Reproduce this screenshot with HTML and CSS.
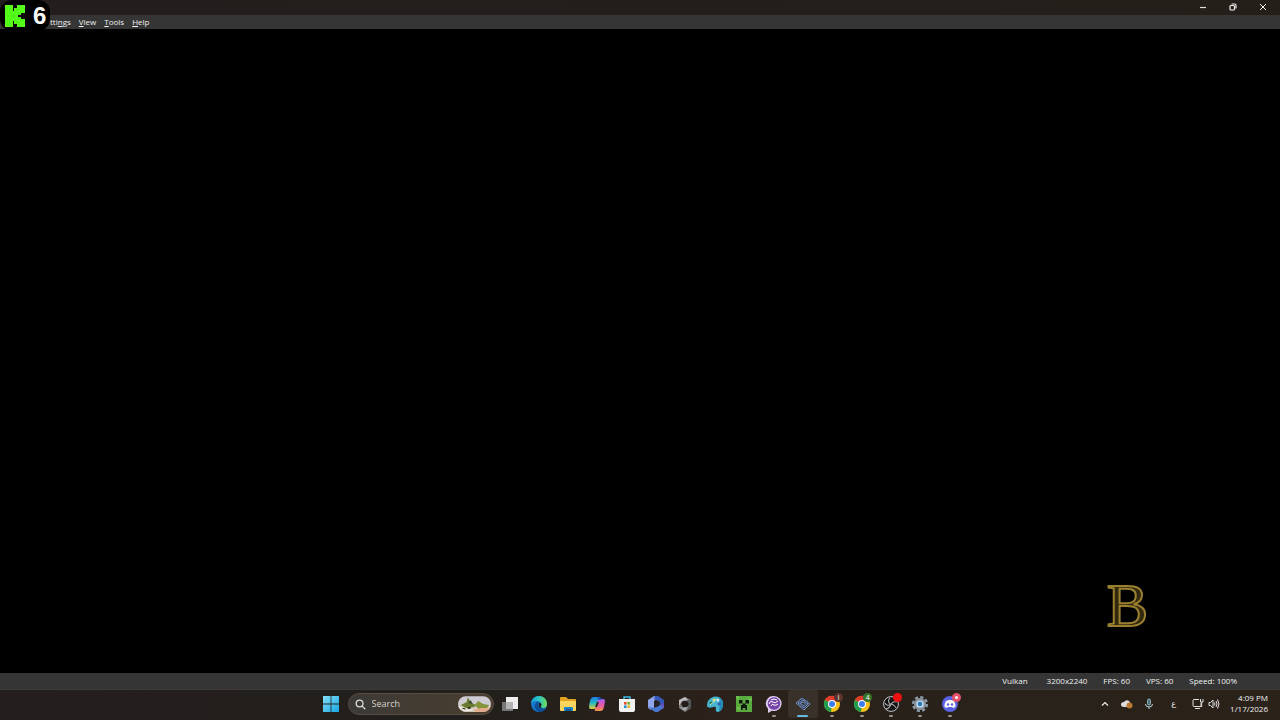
FILE: index.html
```html
<!DOCTYPE html>
<html lang="en">
<head>
    <meta charset="UTF-8">
    <meta name="viewport" content="width=device-width, initial-scale=1.0">
    <title>Emulator</title>
    <link rel="stylesheet" href="styles.css">
</head>
<body>
    <header class="titlebar">
        <button class="window-button" aria-label="Minimize">
            <svg width="8" height="8" viewBox="0 0 8 8"><path d="M1 4.5h6" stroke="#ddd" stroke-width="1.2"/></svg>
        </button>
        <button class="window-button" aria-label="Restore">
            <svg width="8" height="8" viewBox="0 0 8 8" fill="none" stroke="#eee" stroke-width="1.2"><rect x="1" y="2.5" width="4.5" height="4.5" rx="1"/><path d="M2.5 1h3Q7 1 7 2.5v3"/></svg>
        </button>
        <button class="window-button" aria-label="Close">
            <svg width="8" height="8" viewBox="0 0 8 8"><path d="M1 1l6 6M7 1L1 7" stroke="#eee"/></svg>
        </button>
    </header>

    <nav class="menubar">
        <button aria-label="Settings">tti<u>n</u>gs</button>
        <button><u>V</u>iew</button>
        <button><u>T</u>ools</button>
        <button><u>H</u>elp</button>
    </nav>

    <!-- Viewer counter that floats over the window -->
    <div class="viewers">
        <svg width="20" height="22" viewBox="0 0 20 22" fill="#53fc18">
            <rect x="0" y="0" width="8" height="22"/>
            <rect x="7" y="6" width="6" height="10"/>
            <rect x="9" y="3" width="7" height="7"/>
            <rect x="9" y="12" width="7" height="7"/>
            <rect x="12" y="0" width="8" height="8"/>
            <rect x="12" y="14" width="8" height="8"/>
        </svg>
        <span>6</span>
    </div>

    <main class="screen">
        <span class="screen-letter">B</span>
    </main>

    <div class="statusbar">
        <span class="renderer">Vulkan</span>
        <span>3200x2240</span>
        <span>FPS: 60</span>
        <span>VPS: 60</span>
        <span>Speed: 100%</span>
    </div>

    <footer class="taskbar">
        <div class="taskbar-center">
            <button class="start" aria-label="Start">
                <svg width="16" height="16" viewBox="0 0 16 16">
                    <defs><linearGradient id="win" x2="1" y2="1"><stop stop-color="#83e0fa"/><stop offset="1" stop-color="#19a5e4"/></linearGradient></defs>
                    <path d="M0 0h7.6v7.6H0zM8.4 0H16v7.6H8.4zM0 8.4h7.6V16H0zM8.4 8.4H16V16H8.4z" fill="url(#win)"/>
                </svg>
            </button>

            <label class="search">
                <svg width="11" height="11" viewBox="0 0 12 12" fill="none" stroke="#ddd" stroke-width="1.4"><circle cx="5" cy="5" r="3.7"/><path d="M7.8 7.8l3.4 3.4"/></svg>
                <input type="text" placeholder="Search" aria-label="Search">
                <svg width="33" height="18" viewBox="0 0 34 18">
                    <defs><clipPath id="pill"><rect y="1" width="34" height="16" rx="8"/></clipPath></defs>
                    <g clip-path="url(#pill)">
                        <rect width="34" height="18" fill="#cfcbd3"/>
                        <path d="M0 11l8-2 10 3 16-1v7H0z" fill="#d9cbb5"/>
                        <path d="M3 10l6-3 1-5 3 5 5 3-1 2-9 1z" fill="#697b31"/>
                        <path d="M17 10l4-4 5 3 6 1-2 3-9 1z" fill="#849438"/>
                        <path d="M11 8l2-3 2 4z" fill="#33472c"/>
                        <path d="M17 15l8-2 9 1v4H18z" fill="#e5a987"/>
                        <path d="M4 14h3M10 13h3" stroke="#272b22" stroke-width="2"/>
                        <path d="M1 12l6 4 8-1" fill="none" stroke="#eee" stroke-width="1.4"/>
                    </g>
                </svg>
            </label>

            <div class="apps">
                <button aria-label="Task view">
                    <svg width="18" height="18" viewBox="0 0 18 18"><rect x="2" y="7" width="11" height="9" fill="#777"/><rect x="6" y="2" width="12" height="12" fill="#eee"/><rect x="6" y="7" width="7" height="7" fill="#b5b5b5"/></svg>
                </button>
                <button aria-label="Edge">
                    <svg width="18" height="18" viewBox="0 0 18 18">
                        <defs><linearGradient id="edge" x2="1" y2="0"><stop stop-color="#199bdc"/><stop offset=".5" stop-color="#2ec5c1"/><stop offset="1" stop-color="#72dd52"/></linearGradient></defs>
                        <circle cx="9" cy="9" r="8" fill="#1676c9"/>
                        <path d="M1 9a8 8 0 0 1 16 0c0 3-2 4-4 4s-3-1-2-2c1-3-1-5-4-5-3 0-5 1-6 3z" fill="url(#edge)"/>
                        <path d="M7 7c-4 3-2 9 3 10 2 0 5-2 6-4-3 2-8 1-8-3 0-1 0-2 1-3z" fill="#0c4d99"/>
                        <path d="M9 8c3 0 3 2 2 3s0 2 2 2c-3 1-5-1-4-5z" fill="#211f1b"/>
                    </svg>
                </button>
                <button aria-label="File Explorer">
                    <svg width="18" height="18" viewBox="0 0 18 18"><path d="M1 3q0-1 1-1h5l2 2h7q1 0 1 1v3H1z" fill="#e3a321"/><path d="M1 6h16v9q0 1-1 1H2q-1 0-1-1z" fill="#fdd45e"/><path d="M5 16v-3q0-1 1-1h7q1 0 1 1v3z" fill="#1e83c7"/><path d="M7 14h5v2H7z" fill="#145b96"/></svg>
                </button>
                <button aria-label="Copilot">
                    <svg width="18" height="18" viewBox="0 0 18 18">
                        <defs><linearGradient id="cop1" x2="0" y2="1"><stop stop-color="#1b7ee4"/><stop offset=".5" stop-color="#24b8c4"/><stop offset="1" stop-color="#e9cf35"/></linearGradient><linearGradient id="cop2" x2="0" y2="1"><stop stop-color="#a45bf0"/><stop offset=".55" stop-color="#e85aa4"/><stop offset="1" stop-color="#f49443"/></linearGradient></defs>
                        <path d="M5 2h5q2 0 1 2L9 11q-1 3-3 3H3q-2 0-2-2Q2 2 5 2z" fill="url(#cop1)"/>
                        <path d="M13 16H8q-2 0-1-2l2-7q1-3 3-3h3q2 0 2 2-1 10-4 10z" fill="url(#cop2)"/>
                        <path d="M10 7L8 12" stroke="#292820" stroke-width="2"/>
                        <path d="M9 2h2q2 0 2 3h-2q-1-1-2-3z" fill="#1d56cb"/>
                    </svg>
                </button>
                <button aria-label="Microsoft Store">
                    <svg width="18" height="18" viewBox="0 0 18 18"><path d="M6 5V2h6v3" fill="none" stroke="#3bbbe9" stroke-width="1.4"/><path d="M1 4h16v11q0 2-2 2H3q-2 0-2-2z" fill="#f1f1f1"/><path d="M6 7h2.6v2.6H6z" fill="#e95028"/><path d="M9.4 7H12v2.6H9.4z" fill="#76ae28"/><path d="M6 10.4h2.6V13H6z" fill="#1994db"/><path d="M9.4 10.4H12V13H9.4z" fill="#eeb420"/></svg>
                </button>
                <button aria-label="Microsoft 365">
                    <svg width="18" height="18" viewBox="0 0 18 18"><path d="M7 1l5 1-5 4v7l-3 2-3-2V5z" fill="#8fa6ed"/><path d="M8 1h3l6 4v7l-4-2V7L7 4z" fill="#3557b6"/><path d="M17 8v5l-7 4-7-3 5-1 5-3z" fill="#6951b9"/><path d="M1 12l6 1 6-3 4 2-6 5H8z" fill="#4776cf"/><path d="M7 7l3-1 3 2v2l-3 2-3-1z" fill="#25232a"/></svg>
                </button>
                <button aria-label="Game launcher">
                    <svg width="18" height="18" viewBox="0 0 18 18"><path d="M9 2l6 3v8l-6 4-6-4V5z" fill="#777"/><path d="M9 2L3 5v6l3-5 6-1z" fill="#bbb"/><path d="M15 5v8l-4 2 2-6-2-4z" fill="#555"/><path d="M7 6h4l2 3-2 3H7L5 9z" fill="#211c19"/><path d="M3 12l4 1 5-1-3 4z" fill="#aaa"/></svg>
                </button>
                <button aria-label="Paint">
                    <svg width="18" height="18" viewBox="0 0 18 18"><path d="M2 6q4-6 11-4 5 3 4 9-1 5-5 6-3 0-2-4 0-2-3-1-5 2-6-1 0-3 1-5z" fill="#46b5cf"/><path d="M12 2q6 3 5 9-1 4-4 5l1-7z" fill="#238bb8"/><circle cx="5" cy="8" r="1.5" fill="#2a7742"/><circle cx="8" cy="5" r="1.5" fill="#d6df66"/><circle cx="12" cy="5" r="1.5" fill="#d7eef2"/><circle cx="13" cy="9" r="1.5" fill="#375caf"/><path d="M4 10l7-6" stroke="#c4e3d7"/></svg>
                </button>
                <button aria-label="Minecraft">
                    <svg width="18" height="18" viewBox="0 0 18 18"><rect x="1" y="1" width="16" height="16" fill="#59ab3d"/><path d="M1 1h3v3H1zM13 3h4v3h-4zM2 12h3v3H2z" fill="#6dbe4d"/><path d="M4 5h3.5v3.5H4zM10.500 5H14v3.5h-3.5zM7.5 8.5h3V10H12v5h-1.7v-2H7.7v2H6v-5h1.5z" fill="#11180e"/></svg>
                </button>
                <button class="running" aria-label="Messenger">
                    <svg width="18" height="18" viewBox="0 0 18 18"><path d="M9 1a7.5 7.5 0 1 1-2 14.7L3 18v-4.3A7.5 7.5 0 0 1 9 1z" fill="#dbc9ee"/><circle cx="9" cy="8.5" r="6.2" fill="#7542aa"/><path d="M4 9q1-4 4-2 2 2 5-1M6 11q1-3 3-1 2 1 4-1M6 5q3-2 6 0" fill="none" stroke="#fff"/></svg>
                </button>
                <button class="running active" aria-label="Emulator">
                    <svg width="18" height="18" viewBox="0 0 18 18" fill="none" stroke="#7796cb"><path d="M2 8l6-5 8 6-6 6zM4 8l5-3 5 4-4 4zM6 8l3-1 3 2-2 2z"/><path d="M4 11l5-8M8 14l6-9" stroke="#405f9b"/></svg>
                </button>
                <button class="running" aria-label="Chrome, profile 1">
                    <svg width="18" height="18" viewBox="0 0 18 18"><circle cx="9" cy="9" r="8" fill="#fbc116"/><path d="M9 9L2 5a8 8 0 0 1 14 0z" fill="#e33b2e"/><path d="M9 9l-1 8A8 8 0 0 1 2 5z" fill="#239b4c"/><circle cx="9" cy="9" r="4" fill="#fff"/><circle cx="9" cy="9" r="3" fill="#3b7ded"/></svg>
                    <span class="badge badge-brown">I</span>
                </button>
                <button class="running" aria-label="Chrome, profile 4">
                    <svg width="18" height="18" viewBox="0 0 18 18"><circle cx="9" cy="9" r="8" fill="#fbc116"/><path d="M9 9L2 5a8 8 0 0 1 14 0z" fill="#e33b2e"/><path d="M9 9l-1 8A8 8 0 0 1 2 5z" fill="#239b4c"/><circle cx="9" cy="9" r="4" fill="#fff"/><circle cx="9" cy="9" r="3" fill="#3b7ded"/></svg>
                    <span class="badge badge-green">4</span>
                </button>
                <button class="running" aria-label="OBS Studio">
                    <svg width="18" height="18" viewBox="0 0 18 18"><circle cx="9" cy="9" r="7.4" fill="#111" stroke="#c9c9c9"/><path d="M8 3q-3 3 0 6 4 0 6 4M15 7q-4-1-6 2-1 4-5 5M3 8q2 4 6 1" fill="none" stroke="#aaa" stroke-width="1.1"/></svg>
                    <span class="badge badge-red"></span>
                </button>
                <button class="running" aria-label="Settings">
                    <svg width="18" height="18" viewBox="0 0 18 18"><circle cx="9" cy="9" r="6.8" fill="none" stroke="#8a98a5" stroke-width="2.6" stroke-dasharray="3.2 2.14"/><circle cx="9" cy="9" r="6" fill="#8493a0"/><circle cx="9" cy="9" r="3.6" fill="#dceaf4"/><circle cx="9" cy="9" r="2.4" fill="#287bbd"/></svg>
                </button>
                <button class="running" aria-label="Discord">
                    <svg width="18" height="18" viewBox="0 0 18 18"><circle cx="9" cy="9" r="8" fill="#5861df"/><path d="M5 6q4-2 8 0 2 3 1.5 6L12 13l-1-1H7l-1 1-2.5-1Q3 9 5 6z" fill="#fff"/><circle cx="7" cy="9.5" r="1.2" fill="#5861df"/><circle cx="11" cy="9.5" r="1.2" fill="#5861df"/></svg>
                    <span class="badge badge-ring"></span>
                </button>
            </div>
        </div>

        <div class="tray">
            <button aria-label="Show hidden icons">
                <svg width="12" height="12" viewBox="0 0 12 12"><path d="M3 7.5l3-3 3 3" fill="none" stroke="#eee" stroke-width="1.2"/></svg>
            </button>
            <button aria-label="OneDrive">
                <svg width="12" height="12" viewBox="0 0 12 12"><path d="M3 9Q0 9 0 6.5 0 4 3 4q2-3 5-1 1 1 1 2l-3 4z" fill="#ddd"/><circle cx="8.5" cy="7.5" r="3" fill="#b97932"/></svg>
            </button>
            <button aria-label="Microphone">
                <svg width="12" height="12" viewBox="0 0 12 12"><rect x="4.5" y="1" width="3" height="6" rx="1.5" fill="#496f78" stroke="#a4c9ce" stroke-width=".8"/><path d="M2.5 6q0 3 3.5 3t3.5-3M6 9v2" fill="none" stroke="#b9d5d8"/></svg>
            </button>
            <button class="language" lang="ar">ع</button>
            <button class="network" aria-label="Network and volume">
                <svg width="12" height="12" viewBox="0 0 12 12" fill="none" stroke="#ddd"><path d="M7 1.500H2q-1 0-1 1v5q0 1 1 1h7V5M3 10.500h5M8.500 1v3h2.500V1M9.700 4v5"/></svg>
                <svg width="12" height="12" viewBox="0 0 12 12" fill="none" stroke="#ddd"><path d="M1 4.500h1.500L5 2v8L2.500 7.500H1zM6.500 4.500q1 1.500 0 3M8 3q2 3 0 6M9.500 1.500q3 4.500 0 9"/></svg>
            </button>
            <button class="clock">
                <span>4:09 PM</span>
                <span>1/17/2026</span>
            </button>
        </div>
    </footer>
</body>
</html>
```
FILE: styles.css
```css
* {
    box-sizing: border-box;
}
body {
    margin: 0;
    min-height: 100vh;
    display: flex;
    flex-direction: column;
    background-color: #000;
    color: #f0f0f0;
    font-family: "Open Sans", "Noto Sans", sans-serif;
    font-size: 8px;
    line-height: 12px;
}
button {
    display: flex;
    align-items: center;
    justify-content: center;
    margin: 0;
    padding: 0;
    border: none;
    background: none;
    color: inherit;
    font: inherit;
}
svg {
    display: block;
    flex-shrink: 0;
}

/* Window */
.titlebar {
    display: flex;
    justify-content: flex-end;
    height: 15px;
    padding-right: 2px;
    background: linear-gradient(90deg, #231d1d, #241f19);
}
.window-button {
    width: 30px;
    height: 14px;
}
.menubar {
    display: flex;
    gap: 8px;
    height: 14px;
    padding-left: 50px;
    background-color: #353535;
}
.menubar u {
    text-underline-offset: 1px;
}
.viewers {
    position: absolute;
    top: 0;
    left: 0;
    display: flex;
    align-items: center;
    gap: 8px;
    height: 31px;
    padding: 0 4px 0 5px;
    border-radius: 12px;
    background-color: #000;
    color: #fff;
    font-family: "Liberation Sans", sans-serif;
    font-size: 24px;
    font-weight: 700;
    line-height: 31px;
}
.screen {
    flex: 1;
    display: flex;
    align-items: flex-end;
    justify-content: flex-end;
    padding: 0 132px 36px 0;
    background-color: #000;
}
.screen-letter {
    color: #33290f;
    font-family: "Liberation Serif", serif;
    font-size: 62px;
    line-height: 64px;
    -webkit-text-stroke: 2px #9a802e;
}
.statusbar {
    display: flex;
    align-items: center;
    justify-content: flex-end;
    gap: 16px;
    height: 16px;
    padding-right: 43px;
    background-color: #353535;
}
.renderer {
    margin-right: 3px;
}

/* Taskbar */
.taskbar {
    display: grid;
    grid-template-columns: 1fr auto 1fr;
    height: 31px;
    padding-bottom: 2px;
    border-top: 1px solid #3d3b38;
    background: linear-gradient(90deg, #251e1e, #211f1b 35%, #2b211a 55%, #28221a 75%, #2b2219);
}
.taskbar-center {
    grid-column: 2;
    display: flex;
    align-items: center;
}
.start {
    width: 30px;
    height: 28px;
    margin-right: 2px;
}
.search {
    display: flex;
    align-items: center;
    width: 146px;
    height: 22px;
    margin-right: 1px;
    padding: 0 2px 0 6px;
    border: 1px solid #554c43;
    border-radius: 11px;
    background: linear-gradient(90deg, #3c3a37, #493d2d);
}
.search input {
    flex: 1;
    min-width: 0;
    padding: 0 0 0 6px;
    border: none;
    outline: none;
    background: none;
    color: #ddd;
    font: inherit;
    font-size: 9px;
}
.search input::placeholder {
    color: #d5d2ce;
    opacity: 1;
}
.apps {
    display: flex;
    width: 470px;
}
.apps button {
    position: relative;
    flex: 1;
    height: 28px;
}
.apps .running::after {
    content: "";
    position: absolute;
    bottom: 1px;
    width: 4px;
    height: 2px;
    border-radius: 1px;
    background-color: #96928e;
}
.apps .active {
    border-radius: 3px;
    background-color: #37312a;
}
.apps .active::after {
    width: 11px;
    background-color: #66b9e4;
}
.badge {
    position: absolute;
    top: 3px;
    right: 4px;
    width: 9px;
    height: 9px;
    border-radius: 50%;
    color: #fff;
    font-size: 7px;
    line-height: 9px;
    text-align: center;
}
.badge-brown {
    background-color: #5b352d;
}
.badge-green {
    background-color: #32752b;
}
.badge-red {
    background-color: #ed1111;
}
.badge-ring {
    border: 3px solid #e5506a;
    background-color: #fff;
}

/* System tray */
.tray {
    display: flex;
    align-items: center;
    justify-content: flex-end;
    gap: 10px;
    padding-right: 12px;
}
.tray .language {
    width: 12px;
    padding: 0 0 0 5px;
    font-family: "DejaVu Sans", sans-serif;
}
.network {
    gap: 4px;
    margin-left: 5px;
}
.clock {
    flex-direction: column;
    align-items: flex-end;
    padding-bottom: 2px;
    line-height: 11px;
}
```
